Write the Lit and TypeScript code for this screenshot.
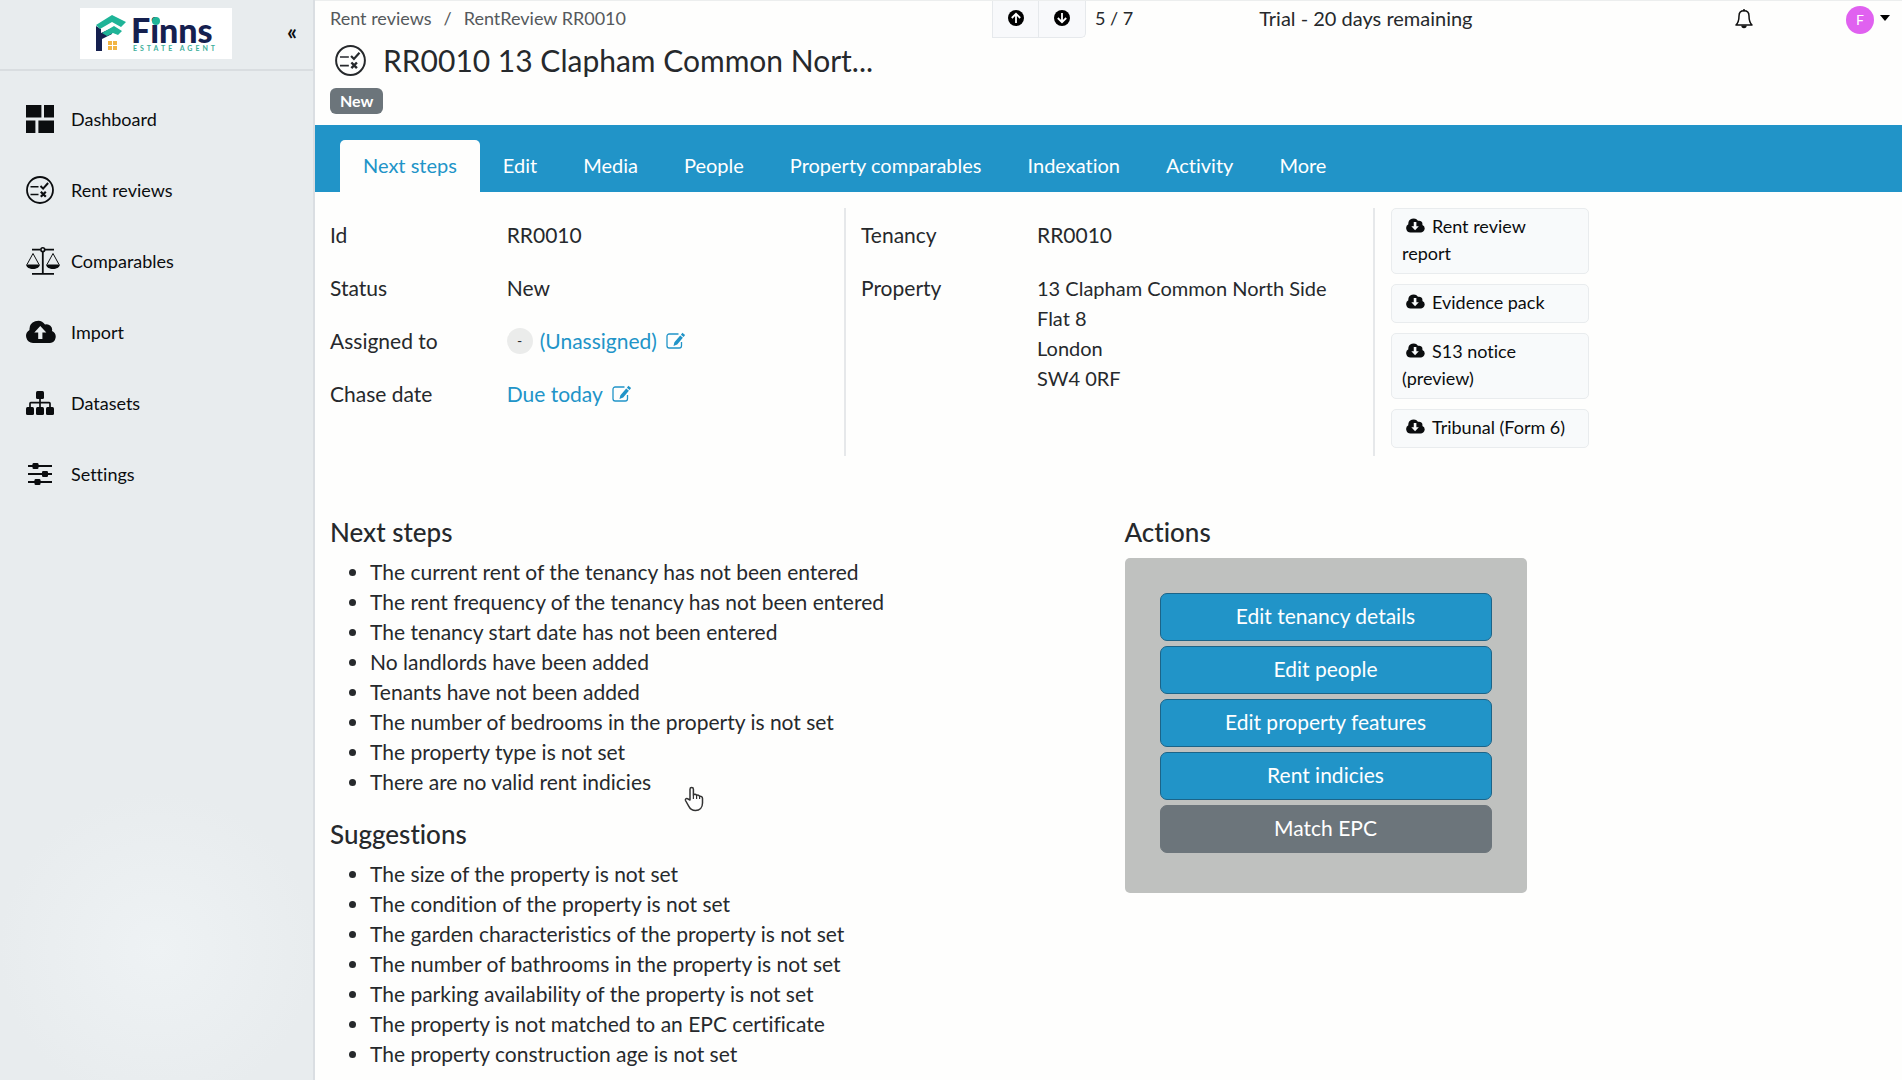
import { LitElement, html, css, svg, TemplateResult } from "lit";
import { customElement, property } from "lit/decorators.js";

const glyphs: Record<string, { box: string; body: TemplateResult }> = {
  dashboard: {
    box: "0 0 28 28",
    body: svg`<path fill="currentColor" d="M0 0h15.400v12.400H0zM18 0h10v12.400H18zM0 15.500h9.400V28H0zM12.400 15.500H28V28H12.400z"/>`,
  },
  review: {
    box: "0 0 28 28",
    body: svg`<g fill="none" stroke="currentColor"><circle cx="14" cy="14" r="13" stroke-width="1.800"/><path stroke-width="1.500" d="M4.500 10.800h8M4.500 18.600h8"/><path stroke-width="2" d="M14.500 10l2.600 2.600 5-5.600"/><path stroke-width="2.200" d="M14.800 15.800l5 5M19.800 15.800l-5 5"/></g>`,
  },
  scales: {
    box: "0 0 34 28",
    body: svg`<g fill="none" stroke="currentColor"><path stroke-width="1.800" d="M6 2.600h8.500M19 2.600h9M16.800 5v21M6 26.800h22"/><circle cx="16.800" cy="2.700" r="1.900" stroke-width="1.600"/><path stroke-width="1" d="M1 17.500L7 6.500l6 11M21 17.500l6-11 6 11"/></g><path fill="currentColor" d="M0 17.500h14c-.5 3-3.500 4.500-7 4.500s-6.500-1.500-7-4.500zM20 17.500h14c-.5 3-3.500 4.500-7 4.500s-6.500-1.500-7-4.500z"/>`,
  },
  cloudUp: {
    box: "0 0 30 24",
    body: svg`<path fill="currentColor" fill-rule="evenodd" d="M7 23a7 7 0 0 1-3.500-13A8.500 8.500 0 0 1 19 4.500 5.500 5.500 0 0 1 26 11a6.300 6.300 0 0 1-2 12zM14.300 6l-6 6.500h3.900V19h4.200v-6.500h3.900z"/>`,
  },
  cloudDown: {
    box: "0 0 30 24",
    body: svg`<path fill="currentColor" fill-rule="evenodd" d="M7 23a7 7 0 0 1-3.500-13A8.500 8.500 0 0 1 19 4.500 5.500 5.500 0 0 1 26 11a6.300 6.300 0 0 1-2 12zM14.300 19.500l6-6.500h-3.900V6.500h-4.200V13H8.300z"/>`,
  },
  tree: {
    box: "0 0 28 26",
    body: svg`<g fill="currentColor"><rect x="10" y="1" width="8" height="8" rx="1.500"/><rect x="0" y="17" width="8" height="8" rx="1.500"/><rect x="10" y="17" width="8" height="8" rx="1.500"/><rect x="20" y="17" width="8" height="8" rx="1.500"/></g><path fill="none" stroke="currentColor" stroke-width="1.700" d="M14 8v10M4 18v-4.500a.8.8 0 0 1 .8-.8h18.400a.8.8 0 0 1 .8.800V18"/>`,
  },
  sliders: {
    box: "0 0 28 28",
    body: svg`<path stroke="currentColor" stroke-width="1.800" d="M2 6h24M2 14h24M2 22h24"/><g fill="currentColor"><rect x="6.500" y="3" width="6" height="6" rx="1.200"/><rect x="16" y="11" width="6" height="6" rx="1.200"/><rect x="8.500" y="19" width="6" height="6" rx="1.200"/></g>`,
  },
  up: {
    box: "0 0 16 16",
    body: svg`<circle cx="8" cy="8" r="8" fill="currentColor"/><path fill="none" stroke="#fff" stroke-width="1.800" d="M8 13V4M3.800 8L8 3.800 12.200 8"/>`,
  },
  down: {
    box: "0 0 16 16",
    body: svg`<circle cx="8" cy="8" r="8" fill="currentColor"/><path fill="none" stroke="#fff" stroke-width="1.800" d="M8 3v9M3.800 8L8 12.200 12.200 8"/>`,
  },
  bell: {
    box: "0 0 18 20",
    body: svg`<path fill="none" stroke="currentColor" stroke-width="1.500" stroke-linejoin="round" d="M9 1.800c-3.300 0-5 2.400-5 5.200 0 5-1 7-3 9h16c-2-2-3-4-3-9 0-2.800-1.700-5.200-5-5.200z"/><path fill="currentColor" d="M6.300 16.500h5.400a2.700 2.700 0 0 1-5.400 0zM8 .3h2v2H8z"/>`,
  },
  edit: {
    box: "0 0 20 18",
    body: svg`<path fill="none" stroke="currentColor" stroke-width="1.300" d="M12.500 2H3.200A2.200 2.200 0 0 0 1 4.200v9.600A2.200 2.200 0 0 0 3.200 16h10.100a2.200 2.200 0 0 0 2.200-2.200V10"/><path fill="currentColor" d="M16.400.8l2.700 2.200-1.500 1.900-2.700-2.200zM14.200 3.500l2.700 2.200-5.700 6.700-3.700 1.500.9-3.700z"/>`,
  },
};

@customElement("ui-icon")
export class UiIcon extends LitElement {
  @property() name = "edit";
  static styles = css`
    :host { display: inline-flex; }
    svg { display: block; width: 100%; height: 100%; }
  `;
  render() {
    const g = glyphs[this.name];
    return html`<svg viewBox=${g.box} aria-hidden="true">${g.body}</svg>`;
  }
}

const nav = [
  ["dashboard", "Dashboard"],
  ["review", "Rent reviews"],
  ["scales", "Comparables"],
  ["cloudUp", "Import"],
  ["tree", "Datasets"],
  ["sliders", "Settings"],
];
const tabs = ["Next steps", "Edit", "Media", "People", "Property comparables", "Indexation", "Activity", "More"];
const downloads = ["Rent review report", "Evidence pack", "S13 notice (preview)", "Tribunal (Form 6)"];
const steps = [
  "The current rent of the tenancy has not been entered",
  "The rent frequency of the tenancy has not been entered",
  "The tenancy start date has not been entered",
  "No landlords have been added",
  "Tenants have not been added",
  "The number of bedrooms in the property is not set",
  "The property type is not set",
  "There are no valid rent indicies",
];
const suggestions = [
  "The size of the property is not set",
  "The condition of the property is not set",
  "The garden characteristics of the property is not set",
  "The number of bathrooms in the property is not set",
  "The parking availability of the property is not set",
  "The property is not matched to an EPC certificate",
  "The property construction age is not set",
];
const actions = ["Edit tenancy details", "Edit people", "Edit property features", "Rent indicies", "Match EPC"];

@customElement("app-root")
export class AppRoot extends LitElement {
  static styles = css`
    :host {
      --blue: #2194c8;
      --ink: #26292c;
      display: grid;
      grid-template-columns: 315px minmax(0, 1fr);
      min-height: 100vh;
      box-sizing: border-box;
      background: #fefefd;
      color: var(--ink);
      font: 400 21px/30px Lato, "Liberation Sans", sans-serif;
      font-variant-ligatures: none;
    }
    * { box-sizing: border-box; }
    h1, h2, ul, ol, dl, dd, p { margin: 0; padding: 0; }
    .nav { list-style: none; }
    a { color: inherit; text-decoration: none; }
    button { font: inherit; color: inherit; cursor: pointer; margin: 0; }

    .side {
      background: radial-gradient(circle 158px at 157px calc(100% - 130px), #eef2f4, #e8ecee) #e8ecef;
      border-right: 2px solid #dadee2; color: #0b0d0f;
    }
    .brand {
      display: flex; align-items: center; height: 71px; padding: 0 16px 2px 80px;
      border-bottom: 2px solid #d9dde0; justify-content: space-between;
    }
    .logo { display: flex; width: 152px; height: 51px; background: #fff; }
    .fold { border: 0; background: none; padding: 0 0 4px; font-weight: 700; font-size: 22px; line-height: 24px; }
    .nav { padding-top: 12px; }
    .nav a { display: flex; align-items: center; height: 71px; padding-left: 26px; font-size: 18px; }
    .nav ui-icon { width: 28px; height: 28px; margin-right: 17px; }
    .nav .i-scales { width: 34px; margin-right: 11px; }
    .nav .i-cloudUp { width: 30px; height: 24px; margin-right: 15px; }

    .top {
      display: grid; grid-template-columns: minmax(0, 662px) auto 1fr auto auto;
      height: 125px; border-top: 1px solid #eceeee; align-items: start; padding: 0 12px 0 15px;
    }
    .crumbs { display: flex; gap: 12px; font-size: 18px; line-height: 35px; color: #55595c; }
    h1 {
      display: flex; align-items: center; gap: 17px; padding-left: 5px;
      font-weight: 400; font-size: 30px; line-height: 48px; white-space: nowrap;
    }
    h1 ui-icon { width: 31px; height: 31px; flex: none; }
    .badge {
      display: inline-block; margin-top: 3px; padding: 0 10px; border-radius: 6px; background: #6c757b;
      color: #fff; font-weight: 700; font-size: 16px; line-height: 26px;
    }
    .pager { display: flex; font-size: 18px; line-height: 34px; }
    .pager button {
      display: flex; align-items: center; justify-content: center; width: 47px; height: 37px; padding: 0 0 2px;
      background: #f8f9fb; border: 1px solid #e6e9ec; border-top: 0; color: #000;
    }
    .pager button + button { border-left: 0; border-bottom-right-radius: 5px; }
    .pager ui-icon { width: 16px; height: 16px; }
    .pager span { margin-left: 9px; }
    .trial { font-size: 20px; line-height: 34px; padding-left: 126px; }
    .bell { border: 0; background: none; padding: 8px 0 0; width: 18px; margin-right: 93px; color: #111; }
    .bell ui-icon { display: flex; width: 18px; height: 20px; }
    .user { display: flex; align-items: center; gap: 6px; border: 0; background: none; padding: 5px 0 0; }
    .face {
      width: 28px; height: 28px; border-radius: 50%; background: #e061f0; color: #fff;
      font-size: 14px; line-height: 28px; text-align: center;
    }
    .caret { border: 5px solid transparent; border-top: 6px solid #000; border-bottom: 0; margin-bottom: 4px; }

    .tabs { display: flex; height: 67px; background: var(--blue); padding: 15px 25px 0; color: #fff; font-size: 20px; }
    .tabs a { padding: 0 23px; line-height: 50px; }
    .tabs .on { background: #fefefd; color: var(--blue); border-radius: 5px 5px 0 0; }

    .facts { display: grid; grid-template-columns: 1fr 1fr 1fr; padding-top: 16px; }
    .facts > * + * { border-left: 2px solid #e6e8ea; }
    .facts dl {
      display: grid; grid-template-columns: 11fr 21fr; align-content: start; row-gap: 23px;
      padding: 12px 0 0 15px; min-height: 248px;
    }
    .facts dt, .facts dd { white-space: nowrap; min-width: 0; }
    .facts dd { display: flex; align-items: center; }
    .facts .addr { display: block; font-size: 20px; }
    .link { display: flex; align-items: center; gap: 9px; color: var(--blue); }
    .link ui-icon { width: 20px; height: 18px; }
    .none {
      width: 26px; height: 26px; margin-right: 7px; border-radius: 50%; background: #ebeceb;
      font-size: 14px; line-height: 26px; text-align: center;
    }
    .files { display: flex; flex-direction: column; align-items: flex-start; gap: 10px; padding-left: 16px; }
    .files button {
      width: 198px; padding: 4px 10px 6px; border: 1px solid #e9ecee; border-radius: 5px; background: #f8fafb;
      color: #0b0d0f; font-size: 18px; line-height: 27px; text-align: left;
    }
    .files ui-icon { width: 19px; height: 15px; margin: 0 7px 0 4px; }

    .body { display: grid; grid-template-columns: 1fr 1fr; padding-top: 59px; }
    .body > * { padding-left: 15px; }
    .body > * + * { padding-left: 16px; }
    h2 { font-weight: 500; font-size: 26px; line-height: 34px; }
    .list { padding: 8px 0 0 40px; }
    .list + h2 { margin-top: 20px; }
    .panel {
      display: flex; flex-direction: column; gap: 5px; width: 402px; margin-top: 9px; padding: 35px 35px 40px;
      border-radius: 5px; background: #bfc1bf;
    }
    .panel button {
      height: 48px; padding: 0 0 2px; border: 1px solid #1c6488; border-radius: 7px;
      background: var(--blue); color: #fff;
    }
    .panel .muted { background: #6c757b; border-color: #6c757b; }
    .hand { position: absolute; left: 684px; top: 786px; width: 20px; height: 26px; }
  `;

  render() {
    return html`
      <aside class="side">
        <div class="brand">
          <a class="logo" href="#" aria-label="Finns Estate Agent">
            <svg viewBox="0 0 152 51" width="152" height="51">
              <path fill="#15204f" d="M16 18l5 3v4l11-5v6l-10 5v12h-6z" />
              <path fill="#1fb498" d="M16 17L32 7l14 7-5 5-9-5-12 7zM22 25l12-7 8 5-4 4-5-2-6 3z" />
              <g fill="#f2b544"><path d="M28 33h4v4h-4zM33 33h4v4h-4zM28 38h4v4h-4zM33 38h4v4h-4z" /></g>
              <text x="51" y="35" font-family="Lato, sans-serif" font-weight="900" font-size="34" fill="#15204f">Finns</text>
              <circle cx="76" cy="13" r="4" fill="#1fb498" />
              <text x="53" y="43" font-family="Lato, sans-serif" font-weight="700" font-size="7" letter-spacing="3" fill="#3cae9b">ESTATE AGENT</text>
            </svg>
          </a>
          <button class="fold" aria-label="Collapse menu">«</button>
        </div>
        <nav>
          <ul class="nav">
            ${nav.map(([i, t]) => html`<li><a href="#"><ui-icon class="i-${i}" name=${i}></ui-icon>${t}</a></li>`)}
          </ul>
        </nav>
      </aside>
      <main>
        <header class="top">
          <div>
            <nav class="crumbs"><a href="#">Rent reviews</a><span>/</span><span>RentReview RR0010</span></nav>
            <h1><ui-icon name="review"></ui-icon><span>RR0010 13 Clapham Common Nort...</span></h1>
            <span class="badge">New</span>
          </div>
          <div class="pager">
            <button aria-label="Previous"><ui-icon name="up"></ui-icon></button>
            <button aria-label="Next"><ui-icon name="down"></ui-icon></button>
            <span>5 / 7</span>
          </div>
          <p class="trial">Trial - 20 days remaining</p>
          <button class="bell" aria-label="Notifications"><ui-icon name="bell"></ui-icon></button>
          <button class="user" aria-label="Account"><span class="face">F</span><span class="caret"></span></button>
        </header>
        <nav class="tabs">${tabs.map((t, i) => html`<a href="#" class=${i ? "" : "on"}>${t}</a>`)}</nav>
        <section class="facts">
          <dl>
            <dt>Id</dt><dd>RR0010</dd>
            <dt>Status</dt><dd>New</dd>
            <dt>Assigned to</dt>
            <dd><span class="none">-</span><a class="link" href="#">(Unassigned)<ui-icon name="edit"></ui-icon></a></dd>
            <dt>Chase date</dt>
            <dd><a class="link" href="#">Due today<ui-icon name="edit"></ui-icon></a></dd>
          </dl>
          <dl>
            <dt>Tenancy</dt><dd>RR0010</dd>
            <dt>Property</dt>
            <dd class="addr">13 Clapham Common North Side<br />Flat 8<br />London<br />SW4 0RF</dd>
          </dl>
          <div class="files">
            ${downloads.map((d) => html`<button><ui-icon name="cloudDown"></ui-icon>${d}</button>`)}
          </div>
        </section>
        <section class="body">
          <div>
            <h2>Next steps</h2>
            <ul class="list">${steps.map((s) => html`<li>${s}</li>`)}</ul>
            <h2>Suggestions</h2>
            <ul class="list">${suggestions.map((s) => html`<li>${s}</li>`)}</ul>
          </div>
          <div>
            <h2>Actions</h2>
            <div class="panel">
              ${actions.map((a) => html`<button class=${a === "Match EPC" ? "muted" : ""}>${a}</button>`)}
            </div>
          </div>
        </section>
      </main>
      <svg class="hand" viewBox="0 0 20 26" aria-hidden="true">
        <path fill="#fff" stroke="#333" stroke-width="1.500" stroke-linejoin="round"
          d="M6 14V3.200a1.700 1.700 0 0 1 3.400 0V9c.8-1.200 2.900-.9 3.200.5 1-.8 2.700-.4 3 .9 1.300-.5 2.900.3 2.900 2V17c0 4.500-2.800 7.500-7 7.500-3.500 0-5.500-1.600-6.800-4.300L1.500 14.500c-.6-1.600 1.300-2.700 2.500-1.500z" />
        <path stroke="#333" stroke-width="1.200" d="M9.400 9v4M12.600 9.500V13M15.600 10.500V13" />
      </svg>
    `;
  }
}
